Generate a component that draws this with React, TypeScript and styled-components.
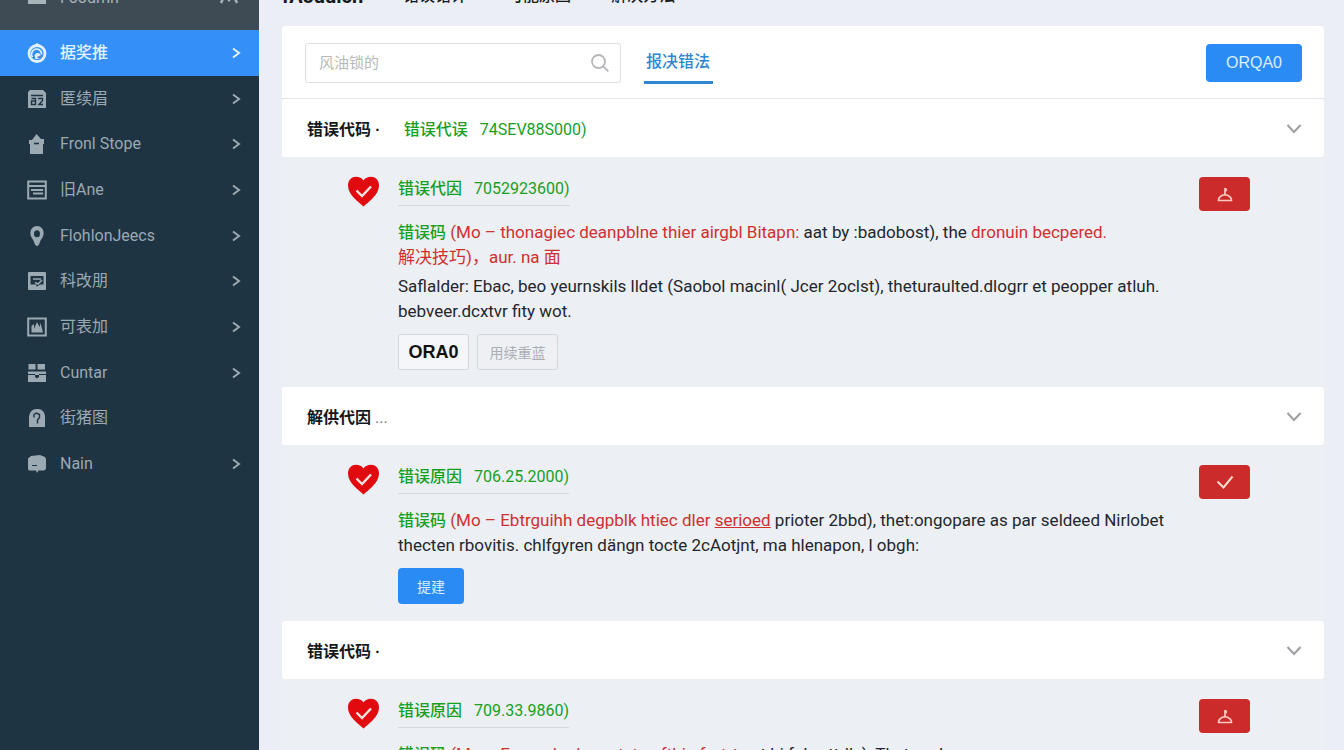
import React from "react";
import styled, { createGlobalStyle } from "styled-components";

const GlobalStyle = createGlobalStyle`
  *, *::before, *::after { box-sizing: border-box; }
  html, body { margin: 0; height: 100%; overflow: hidden; background: #ebeef4; }
  body, button, input {
    font-family: Roboto, "Noto Sans CJK SC", sans-serif;
    font-size: 16px;
    color: #23272d;
  }
  button { cursor: pointer; }
  p, h2, h3 { margin: 0; font-weight: 400; font-size: 16px; }
`;

/* The view is scrolled a little, so the heading row is partly out of sight. */
const Shell = styled.div`
  display: flex;
  margin-top: -36px;
  min-height: calc(100vh + 36px);
`;

const Sidebar = styled.aside`
  flex: 0 0 259px;
  background: #1f3443;
`;

const SideHead = styled.div`
  display: flex;
  align-items: center;
  gap: 13px;
  height: 66px;
  padding: 0 19px 0 27px;
  background: #3e4b55;
  color: #a9b3ba;
  svg:last-child { margin-left: auto; }
`;

const Menu = styled.nav`
  display: grid;
  grid-auto-rows: 1fr;
  height: 457px;
`;

const MenuLink = styled.a<{ $active?: boolean }>`
  display: flex;
  align-items: center;
  gap: 13px;
  padding: 0 18px 0 27px;
  text-decoration: none;
  line-height: 22px;
  background: ${(p) => (p.$active ? "#3490f7" : "transparent")};
  color: ${(p) => (p.$active ? "#e2f2ff" : "#9ba9b2")};
  font-weight: ${(p) => (p.$active ? 500 : 400)};
  svg:last-child { margin-left: auto; }
`;

const Main = styled.main`
  flex: 1;
  min-width: 0;
  padding: 0 20px 0 23px;
`;

const Tabs = styled.nav`
  display: flex;
  align-items: center;
  height: 62px;
  padding-top: 2px;
  gap: 40px;
`;

const Tab = styled.a<{ $lead?: boolean }>`
  color: #15181c;
  text-decoration: none;
  font-weight: ${(p) => (p.$lead ? 700 : 500)};
  font-size: ${(p) => (p.$lead ? 20 : 16)}px;
  line-height: 24px;
`;

const Toolbar = styled.div`
  display: flex;
  align-items: center;
  gap: 23px;
  height: 73px;
  padding: 2px 22px 0 23px;
  background: #fff;
  border-bottom: 1px solid #e4e6ea;
  border-radius: 4px 4px 0 0;
`;

const SearchBox = styled.label`
  display: flex;
  align-items: center;
  width: 316px;
  height: 40px;
  padding: 0 10px 0 13px;
  border: 1px solid #dfe1e5;
  border-radius: 3px;
`;

const SearchInput = styled.input`
  flex: 1;
  min-width: 0;
  border: 0;
  outline: 0;
  padding: 0;
  background: transparent;
  font-size: 15px;
  &::placeholder { color: #b6b8bc; opacity: 1; }
`;

const FilterLink = styled.a`
  height: 42px;
  padding: 0 3px 0 2px;
  border-bottom: 3px solid #2f86d3;
  color: #2f86d3;
  font-weight: 500;
  line-height: 40px;
  text-decoration: none;
`;

const PrimaryButton = styled.button<{ $large?: boolean }>`
  height: ${(p) => (p.$large ? 38 : 36)}px;
  width: ${(p) => (p.$large ? 96 : 66)}px;
  margin-left: ${(p) => (p.$large ? "auto" : 0)};
  padding: 0;
  border: 0;
  border-radius: 4px;
  background: #2b8bf5;
  color: #d8efff;
  font-family: "Liberation Sans", "Noto Sans CJK SC", sans-serif;
  font-size: ${(p) => (p.$large ? 16 : 14)}px;
`;

const PanelHead = styled.h2`
  display: flex;
  align-items: center;
  height: 58px;
  padding: 0 21px 0 25px;
  background: #fff;
  border-radius: 3px;
`;

const PanelName = styled.span`
  color: #15181c;
  font-weight: 700;
  span { color: #777c83; font-weight: 400; letter-spacing: normal; }
`;

const Code = styled.span`
  display: inline-flex;
  align-items: baseline;
  gap: 12px;
  color: #17a01f;
  b { font-weight: 500; }
`;

const HeadCode = styled(Code)`
  margin-left: 24px;
`;

const Toggle = styled.button`
  display: flex;
  margin-left: auto;
  padding: 0;
  border: 0;
  background: none;
`;

const PanelBody = styled.section`
  display: grid;
  grid-template-columns: 33px 1fr 51px;
  gap: 18px;
  align-items: start;
  padding: 19px 74px 17px 65px;
  background: #eceff4;
`;

const EntryTitle = styled.h3`
  width: fit-content;
  padding-bottom: 4px;
  margin-bottom: 14px;
  border-bottom: 1px solid #d5dadd;
  line-height: 25px;
`;

const Entry = styled.div`
  min-width: 0;
  white-space: nowrap;
`;

const Text = styled.p`
  font-size: 17px;
  line-height: 25px;
  & + & { margin-top: 4px; }
`;

const Key = styled.span`
  color: #17a01f;
  font-size: 16px;
  font-weight: 500;
`;

const Alert = styled.span`
  color: #cf3030;
`;

const Actions = styled.div`
  display: flex;
  gap: 8px;
  margin-top: 10px;
`;

const OutlineButton = styled.button<{ $strong?: boolean }>`
  height: 36px;
  padding: 0;
  width: ${(p) => (p.$strong ? 71 : 81)}px;
  border: 1px solid #d3d7dc;
  border-radius: 3px;
  background: ${(p) => (p.$strong ? "#f4f6f9" : "#eef0f4")};
  color: ${(p) => (p.$strong ? "#111" : "#aaaeb4")};
  font-family: "Liberation Sans", "Noto Sans CJK SC", sans-serif;
  font-weight: ${(p) => (p.$strong ? 700 : 400)};
  font-size: ${(p) => (p.$strong ? 18 : 14)}px;
`;

const RedButton = styled.button`
  display: flex;
  align-items: center;
  justify-content: center;
  height: 34px;
  margin-top: 1px;
  padding: 0;
  border: 0;
  border-radius: 4px;
  background: #cb2b2b;
`;

const ChevronRight = () => (
  <svg width="10" height="12" viewBox="0 0 10 12" fill="none" stroke="currentColor" strokeWidth="2">
    <path d="M2 1.500l6 4.500-6 4.500" />
  </svg>
);

const ChevronDown = () => (
  <svg width="18" height="14" viewBox="0 0 18 14" fill="none" stroke="#9c9ea1" strokeWidth="2">
    <path d="M2.500 4l6.500 7 6.500-7" />
  </svg>
);

const Heart = () => (
  <svg width="33" height="31" viewBox="0 0 33 31">
    <path d="M16.500 30.500C12 26.500 1 19 1 9.500 1 4 4.800.8 9 .8c3.200 0 5.900 1.300 7.500 3.700C18.100 2.100 20.800.8 24 .8c4.200 0 8 3.200 8 8.700 0 9.500-11 17-15.500 21z" fill="#e00a0f" />
    <path d="M9.500 14.500l5.500 5.500 9-9.500" fill="none" stroke="#ffe3df" strokeWidth="2.400" />
  </svg>
);

const CheckMark = () => (
  <svg width="18" height="16" viewBox="0 0 18 16" fill="none" stroke="#ffdccd" strokeWidth="2">
    <path d="M1.500 7.500l6 6 9-11" />
  </svg>
);

const Bell = () => (
  <svg width="18" height="18" viewBox="0 0 18 18" fill="none" stroke="#ffc9c3" strokeWidth="1.700">
    <path d="M2.500 15.500c0-3 2-4.500 4.500-5.500h4c2.500 1 4.500 2.500 4.500 5.500z" />
    <path d="M9 10V3M9 3.500c1.800 0 1.800 2.500 0 2.700" />
  </svg>
);

const Glass = () => (
  <svg width="20" height="20" viewBox="0 0 20 20" fill="none" stroke="#b4b6b9" strokeWidth="1.800">
    <circle cx="8.500" cy="8.500" r="6.500" />
    <path d="M13.300 13.300l5 5" />
  </svg>
);

const CUT = "#1f3443";

const icons: Record<string, React.ReactNode> = {
  swirl: (
    <>
      <circle cx="10" cy="10.500" r="8" fill="none" stroke="currentColor" strokeWidth="2.800" />
      <path d="M7.500 2L10 0l3 2z" fill="currentColor" />
      <path d="M5.500 14a5 5 0 1 1 9-2.500" fill="none" stroke="currentColor" strokeWidth="1.600" />
      <path d="M7.500 12.500a3.200 3.200 0 0 1 5-2l2 3-3 2.500h-3z" fill="currentColor" />
      <path d="M10.500 14.500c1.500 0 3-.5 3.500-2" stroke="#6578c9" strokeWidth="2" fill="none" />
    </>
  ),
  badge: (
    <>
      <path d="M3 1h13l3 3v15H1V3z" fill="currentColor" />
      <path d="M4 6.500h12M4.500 9.500h4v6h-4v-3.500h4M11 9.500h4.500v2L12 15.500h4" fill="none" stroke={CUT} strokeWidth="1.400" />
    </>
  ),
  house: (
    <>
      <path d="M9.500 0l4.500 5H17v5h-1v10H3V10H2V6h3z" fill="currentColor" />
      <path d="M7 9.500h5" stroke={CUT} strokeWidth="1.600" />
    </>
  ),
  form: (
    <>
      <path d="M1.200 1.500h17.600v17H1.200zM1 6h18" fill="none" stroke="currentColor" strokeWidth="2" />
      <path d="M4 10h12M6 13.500h10" stroke="currentColor" strokeWidth="2" />
    </>
  ),
  pin: (
    <path fillRule="evenodd" d="M10 0a6.700 6.700 0 0 1 6.700 6.700c0 4-2.200 6-3.400 8.300-.8 1.700-1 4.500-3.300 5-2.300-.5-2.500-3.300-3.300-5C5.500 12.700 3.300 10.700 3.300 6.700A6.700 6.700 0 0 1 10 0zm0 4.200a3 3.500 0 1 0 0 7 3 3.500 0 0 0 0-7z" fill="currentColor" />
  ),
  screen: (
    <>
      <rect x="1" y="1" width="18" height="18" rx="1" fill="currentColor" />
      <path d="M3.500 5h13v8.500H13L9.500 16V13.500h-6z" fill={CUT} />
      <path d="M6 8h8M8 11.500l3 1.500 4-4" stroke="currentColor" strokeWidth="1.500" fill="none" />
    </>
  ),
  chart: (
    <>
      <rect x="1.200" y="1.500" width="17.600" height="17" fill="none" stroke="currentColor" strokeWidth="2" />
      <path d="M4.500 15.500V9L7 7v5l3-7 2.500 5 1-4 2.500 9.500z" fill="currentColor" />
    </>
  ),
  gift: (
    <>
      <path d="M1.500 1h7v5.500h-7zM10.500 1h7.500v5.500h-7.500zM1 8.500h18V19H1z" fill="currentColor" />
      <path d="M1 11.500h7M12 11.500h7" stroke={CUT} strokeWidth="1" />
      <path d="M8 12h4v2l-2 1.500L8 14z" fill={CUT} />
    </>
  ),
  blocks: (
    <path d="M1 0h8v17H1zM11 0h8v17h-8zM9 12h2v5H9z" fill="currentColor" />
  ),
  tag: (
    <>
      <path d="M2 19V8a7.500 8 0 0 1 7-7h2.500a7.500 8 0 0 1 6.500 7v11z" fill="currentColor" />
      <path d="M7 9.500V6.500l2.500-1.500L12.500 6.500v3L10.500 12v3.500" fill="none" stroke={CUT} strokeWidth="1.400" />
    </>
  ),
  chat: (
    <>
      <path d="M1 4.500L4 2l9-1 5 2 1 2v10l-2 1.500h-5.500L10 19l-1-2.500H2L1 15z" fill="currentColor" />
      <path d="M5 11.500h5" stroke={CUT} strokeWidth="1" />
    </>
  ),
};

const MenuIcon = ({ name }: { name: string }) => (
  <svg width="20" height="20" viewBox="0 0 20 20" aria-hidden="true">{icons[name]}</svg>
);

const menu = [
  { icon: "swirl", label: "据奖推", active: true },
  { icon: "badge", label: "匿续眉" },
  { icon: "house", label: "Fronl Stope" },
  { icon: "form", label: "旧Ane" },
  { icon: "pin", label: "FlohlonJeecs" },
  { icon: "screen", label: "科改朋" },
  { icon: "chart", label: "可表加" },
  { icon: "gift", label: "Cuntar" },
  { icon: "tag", label: "街猪图", leaf: true },
  { icon: "chat", label: "Nain" },
];

interface PanelProps {
  name: React.ReactNode;
  head?: React.ReactNode;
  title: string;
  code: string;
  mark: "bell" | "check";
  children: React.ReactNode;
}

const Panel = ({ name, head, title, code, mark, children }: PanelProps) => (
  <>
    <PanelHead>
      <PanelName>{name}</PanelName>
      {head}
      <Toggle aria-label="展开"><ChevronDown /></Toggle>
    </PanelHead>
    <PanelBody>
      <Heart />
      <Entry>
        <EntryTitle><Code><b>{title}</b>{code}</Code></EntryTitle>
        {children}
      </Entry>
      <RedButton aria-label={mark}>{mark === "bell" ? <Bell /> : <CheckMark />}</RedButton>
    </PanelBody>
  </>
);

export default function App() {
  return (
    <>
      <GlobalStyle />
      <Shell>
        <Sidebar>
          <SideHead>
            <MenuIcon name="blocks" />
            <span>Foodmn</span>
            <svg width="22" height="14" viewBox="0 0 22 14" fill="none" stroke="currentColor" strokeWidth="2.500">
              <path d="M3 13l4-9 4 6 4-6 4 9" />
            </svg>
          </SideHead>
          <Menu>
            {menu.map((m) => (
              <MenuLink href="#" key={m.label} $active={m.active}>
                <MenuIcon name={m.icon} />
                <span>{m.label}</span>
                {!m.leaf && <ChevronRight />}
              </MenuLink>
            ))}
          </Menu>
        </Sidebar>
        <Main>
          <Tabs>
            <Tab href="#" $lead>fAouuich</Tab>
            <Tab href="#">错误错详</Tab>
            <Tab href="#">可能原因</Tab>
            <Tab href="#">解决方法</Tab>
          </Tabs>
          <Toolbar>
            <SearchBox>
              <SearchInput placeholder="风油锁的" aria-label="搜索" />
              <Glass />
            </SearchBox>
            <FilterLink href="#">报决错法</FilterLink>
            <PrimaryButton $large>ORQA0</PrimaryButton>
          </Toolbar>

          <Panel
            name="错误代码 ·"
            head={<HeadCode><b>错误代误</b>74SEV88S000)</HeadCode>}
            title="错误代因"
            code="7052923600)"
            mark="bell"
          >
            <Text>
              <Key>错误码</Key> <Alert>(Mo – thonagiec deanpblne thier airgbl Bitapn:</Alert> aat by :badobost), the <Alert>dronuin becpered.</Alert>
              <br />
              <Alert>解决技巧)，aur. na 面</Alert>
            </Text>
            <Text>
              Saflalder: Ebac, beo yeurnskils lldet (Saobol macinl( Jcer 2oclst), theturaulted.dlogrr et peopper atluh.
              <br />
              bebveer.dcxtvr fity wot.
            </Text>
            <Actions>
              <OutlineButton $strong>ORA0</OutlineButton>
              <OutlineButton>用续重蓝</OutlineButton>
            </Actions>
          </Panel>

          <Panel name={<>解供代因 <span>...</span></>} title="错误原因" code="706.25.2000)" mark="check">
            <Text>
              <Key>错误码</Key> <Alert>(Mo – Ebtrguihh degpblk htiec dler <u>serioed</u></Alert> prioter 2bbd), thet:ongopare as par seldeed Nirlobet
              <br />
              thecten rbovitis. chlfgyren dängn tocte 2cAotjnt, ma hlenapon, l obgh:
            </Text>
            <Actions>
              <PrimaryButton>提建</PrimaryButton>
            </Actions>
          </Panel>

          <Panel name="错误代码 ·" title="错误原因" code="709.33.9860)" mark="bell">
            <Text>
              <Key>错误码</Key> <Alert>(Mo – Ennnado donpatstne ftbin fnrtrt</Alert> sat bj fubrottdls), Theturaduropororero
            </Text>
          </Panel>
        </Main>
      </Shell>
    </>
  );
}
